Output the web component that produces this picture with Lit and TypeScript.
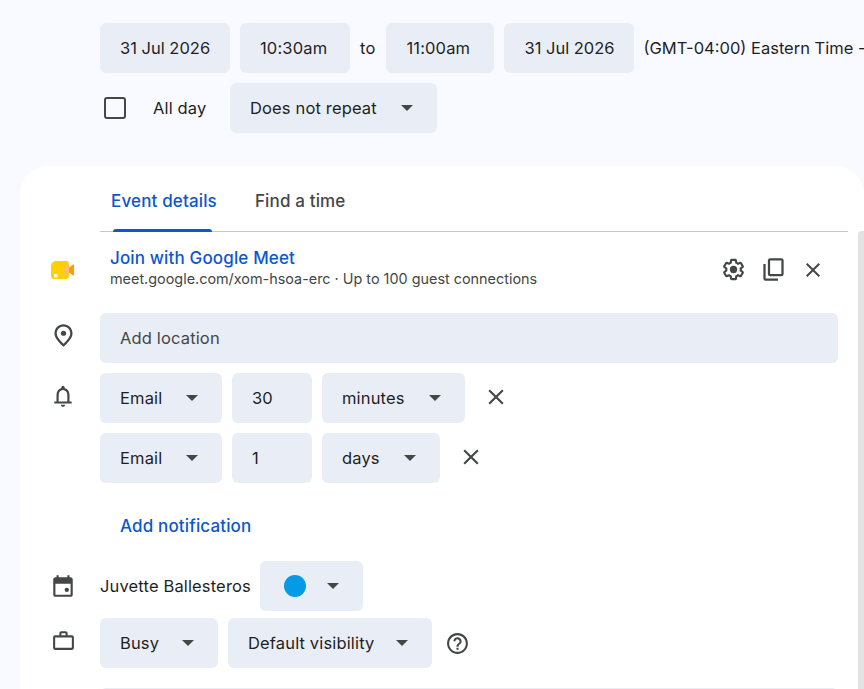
import { LitElement, html, css, svg } from 'lit'
import { customElement } from 'lit/decorators.js'

const ICONS: Record<string, unknown> = {
  close: svg`<path d="M6.4 19 5 17.6l5.6-5.6L5 6.4 6.4 5l5.6 5.6L17.6 5 19 6.4 13.4 12l5.6 5.6-1.4 1.4-5.6-5.6z"/>`,
  gear: svg`<path fill-rule="evenodd" d="M13.85 22.25h-3.7c-.74 0-1.36-.54-1.45-1.27l-.27-1.89c-.27-.14-.53-.29-.79-.46l-1.8.72c-.7.26-1.47-.03-1.81-.65L2.2 15.53c-.35-.66-.2-1.44.36-1.88l1.53-1.19c-.01-.15-.02-.3-.02-.46 0-.15.01-.31.02-.46l-1.52-1.19c-.59-.45-.74-1.26-.37-1.88l1.85-3.19c.34-.62 1.11-.9 1.79-.63l1.81.73c.26-.17.52-.32.78-.46l.27-1.91c.09-.7.71-1.25 1.44-1.25h3.7c.74 0 1.36.54 1.45 1.27l.27 1.89c.27.14.53.29.79.46l1.8-.72c.71-.26 1.48.03 1.82.65l1.84 3.18c.36.66.2 1.44-.36 1.88l-1.52 1.19c.01.15.02.3.02.46s-.01.31-.02.46l1.52 1.19c.56.45.72 1.23.37 1.86l-1.86 3.22c-.34.62-1.11.9-1.8.63l-1.8-.72c-.26.17-.52.32-.78.46l-.27 1.91c-.1.68-.72 1.22-1.46 1.22zm-3.23-2h2.76l.37-2.55.53-.22c.44-.18.88-.44 1.34-.78l.45-.34 2.38.96 1.38-2.4-2.03-1.58.07-.56c.03-.26.06-.51.06-.78s-.03-.53-.06-.78l-.07-.56 2.03-1.58-1.39-2.4-2.39.96-.45-.35c-.42-.32-.87-.58-1.33-.77l-.52-.22-.37-2.55h-2.76l-.37 2.55-.53.21c-.44.19-.88.44-1.34.79l-.45.33-2.38-.95-1.39 2.39 2.03 1.58-.07.56a7 7 0 0 0-.06.79c0 .26.02.53.06.78l.07.56-2.03 1.58 1.38 2.4 2.39-.96.45.35c.43.33.86.58 1.33.77l.53.22.38 2.55z"/><circle cx="12" cy="12" r="3.5"/>`,
  copy: svg`<path fill-rule="evenodd" d="M9 2h10a2 2 0 0 1 2 2v12a2 2 0 0 1-2 2H9a2 2 0 0 1-2-2V4a2 2 0 0 1 2-2zm0 2v12h10V4z"/><path d="M3 7h2v13h11v2H5a2 2 0 0 1-2-2z"/>`,
  pin: svg`<path fill-rule="evenodd" d="M12 2c-4.2 0-8 3.22-8 8.2 0 3.32 2.67 7.25 8 11.8 5.33-4.55 8-8.48 8-11.8C20 5.22 16.2 2 12 2zm0 17.33c-4.05-3.7-6-6.79-6-9.14C6 6.57 8.65 4 12 4s6 2.57 6 6.2c0 2.34-1.95 5.44-6 9.13z"/><circle cx="12" cy="10" r="2.3"/>`,
  bell: svg`<path fill-rule="evenodd" d="M18 17v-6c0-3.07-1.63-5.64-4.5-6.32V4c0-.83-.67-1.5-1.5-1.5s-1.5.67-1.5 1.5v.68C7.64 5.36 6 7.92 6 11v6H4v2h16v-2h-2zm-2 0H8v-6c0-2.48 1.51-4.5 4-4.5s4 2.02 4 4.5v6z"/><path d="M12 22c1.1 0 2-.9 2-2h-4c0 1.1.9 2 2 2z"/>`,
  calendar: svg`<path fill-rule="evenodd" d="M19 4h-1V2h-2v2H8V2H6v2H5c-1.1 0-2 .9-2 2v14c0 1.1.9 2 2 2h14c1.1 0 2-.9 2-2V6c0-1.1-.9-2-2-2zM5 10h14v10H5z"/><circle cx="15.5" cy="15.5" r="2"/>`,
  bag: svg`<path fill-rule="evenodd" d="M20 7h-4V5c0-1.1-.9-2-2-2h-4c-1.1 0-2 .9-2 2v2H4c-1.1 0-2 .9-2 2v10c0 1.1.9 2 2 2h16c1.1 0 2-.9 2-2V9c0-1.1-.9-2-2-2zM10 5h4v2h-4zm10 14H4V9h16z"/>`,
  help: svg`<path fill-rule="evenodd" d="M12 2C6.48 2 2 6.48 2 12s4.48 10 10 10 10-4.48 10-10S17.52 2 12 2zm0 18c-4.41 0-8-3.59-8-8s3.59-8 8-8 8 3.59 8 8-3.59 8-8 8z"/><path d="M11 16h2v2h-2zM12.6 6.05c-2.06-.3-3.88.97-4.43 2.79-.18.58.26 1.16.87 1.16h.2c.41 0 .74-.29.88-.67.32-.89 1.27-1.5 2.3-1.28.95.2 1.65 1.13 1.57 2.1-.1 1.34-1.62 1.63-2.45 2.88 0 .01-.01.01-.01.02-.01.02-.02.03-.03.05-.09.15-.18.32-.25.5-.01.03-.03.05-.04.08-.01.02-.01.04-.02.07-.12.34-.2.75-.2 1.25h2c0-.42.11-.77.28-1.07.02-.03.03-.06.05-.09.08-.14.18-.27.28-.39.01-.01.02-.03.03-.04.1-.12.21-.23.33-.34.96-.91 2.26-1.65 1.99-3.56-.24-1.74-1.61-3.21-3.35-3.46z"/>`,
}

const icon = (name: string, size = 24) =>
  html`<span class="slot"><svg class="icon" width=${size} height=${size} viewBox="0 0 24 24">${ICONS[name]}</svg></span>`

const caret = html`<span class="caret"></span>`

@customElement('field-box')
export class FieldBox extends LitElement {
  static styles = css`
    :host {
      display: inline-flex;
      align-items: center;
      justify-content: space-between;
      box-sizing: border-box;
      height: 50px;
      padding: 0 24px 0 20px;
      background: #e9eef6;
      border-radius: 6px;
      color: #1f1f1f;
      white-space: nowrap;
      flex: none;
    }
  `

  render() {
    return html`<slot></slot>`
  }
}

@customElement('app-root')
export class AppRoot extends LitElement {
  static styles = css`
    :host {
      display: block;
      position: relative;
      width: 864px;
      height: 689px;
      overflow: hidden;
      background: #f8faff;
      font-family: Inter, Roboto, 'Liberation Sans', sans-serif;
      font-size: 16.5px;
      letter-spacing: 0.15px;
      color: #1f1f1f;
    }

    .slot {
      display: flex;
      align-items: center;
      justify-content: center;
      width: 24px;
      height: 24px;
      flex: none;
    }

    .icon {
      display: block;
      fill: #444746;
      flex: none;
    }

    .caret {
      display: block;
      width: 0;
      height: 0;
      border-left: 6px solid transparent;
      border-right: 6px solid transparent;
      border-top: 6px solid #444746;
      flex: none;
    }

    .top {
      display: flex;
      flex-direction: column;
      gap: 10px;
      padding: 23px 0 0 100px;
      height: 166px;
      box-sizing: border-box;
    }

    .row {
      display: flex;
      align-items: center;
      gap: 10px;
      white-space: nowrap;
    }

    .date {
      letter-spacing: 0;
    }

    .to {
      width: 16px;
      margin-right: 1px;
      text-align: center;
    }

    .tz {
      margin-left: -1px;
      letter-spacing: 0;
    }

    .check {
      box-sizing: border-box;
      width: 22px;
      height: 22px;
      margin: 0 17px 0 4px;
      border: 2px solid #444746;
      border-radius: 3px;
    }

    .allday {
      width: 67px;
    }

    .card {
      box-sizing: border-box;
      margin-left: 20px;
      height: 523px;
      padding-left: 80px;
      background: #fff;
      border-radius: 28px 28px 0 0;
      overflow: hidden;
    }

    .tabs {
      display: flex;
      width: 748px;
      height: 66px;
      border-bottom: 1px solid #c7c7c7;
      box-sizing: border-box;
      font-size: 17px;
      font-weight: 500;
      color: #444746;
    }

    .tab {
      position: relative;
      display: flex;
      align-items: center;
      height: 66px;
      padding: 4px 13px 0 11px;
      margin-right: 14px;
      box-sizing: border-box;
    }

    .tab.active {
      color: #0b57d0;
    }

    .tab.active::after {
      content: '';
      position: absolute;
      left: 13px;
      right: 18px;
      bottom: 0;
      height: 3px;
      background: #0b57d0;
      border-radius: 3px 3px 0 0;
    }

    .line {
      display: flex;
      align-items: center;
      position: relative;
    }

    .side {
      position: absolute;
      left: -49px;
      top: 0;
      bottom: 0;
      display: flex;
      align-items: center;
    }

    .side.raised {
      bottom: 5px;
    }

    .meet {
      height: 81px;
      padding-left: 10px;
      width: 738px;
      box-sizing: border-box;
    }

    .meet-text {
      flex: 1;
      margin-top: -10px;
    }

    .meet-title {
      color: #0b57d0;
      font-size: 17px;
      font-weight: 500;
      line-height: 22px;
    }

    .meet-sub {
      color: #444746;
      font-size: 14.4px;
      letter-spacing: 0;
      line-height: 19px;
    }

    .meet-actions {
      display: flex;
      gap: 16px;
      margin-right: 13px;
      margin-top: -6px;
    }

    .location {
      width: 738px;
      color: #444746;
      justify-content: flex-start;
    }

    .stack {
      display: flex;
      flex-direction: column;
      gap: 10px;
    }

    .x {
      margin: -2px 0 0 8.5px;
    }

    .add {
      color: #0b57d0;
      font-size: 17px;
      font-weight: 500;
      padding: 8px 0 0 20px;
      height: 78px;
      box-sizing: border-box;
      display: flex;
      align-items: center;
    }

    .owner {
      width: 150px;
    }

    .color {
      width: 103px;
    }

    .dot {
      width: 22px;
      height: 22px;
      margin-left: 4px;
      border-radius: 50%;
      background: #039be5;
    }

    .help {
      margin-left: 3px;
    }

    .busy {
      margin-top: -3px;
    }

    .desc {
      width: 738px;
      height: 50px;
      margin-top: 20px;
      background: #e9eef6;
      border-radius: 6px;
    }

    .scrollbar {
      position: absolute;
      top: 231px;
      right: 0;
      width: 6px;
      height: 458px;
      background: #e3e3e3;
      border-radius: 4px 0 0 0;
    }
  `

  private select(label: string, width: number) {
    return html`<field-box style="width:${width}px">${label}${caret}</field-box>`
  }

  render() {
    return html`
      <div class="top">
        <div class="row">
          <field-box class="date" style="width:130px">31 Jul 2026</field-box>
          <field-box style="width:110px">10:30am</field-box>
          <span class="to">to</span>
          <field-box style="width:108px">11:00am</field-box>
          <field-box class="date" style="width:130px">31 Jul 2026</field-box>
          <span class="tz">(GMT-04:00) Eastern Time -</span>
        </div>
        <div class="row">
          <div class="check"></div>
          <span class="allday">All day</span>
          ${this.select('Does not repeat', 207)}
        </div>
      </div>
      <div class="card">
        <div class="tabs">
          <div class="tab active">Event details</div>
          <div class="tab">Find a time</div>
        </div>
        <div class="line meet">
          <div class="side raised">
            <svg width="23" height="18" viewBox="0 0 23 18">
              <defs>
                <radialGradient id="blush" cx="1" cy="0.5" r="0.45">
                  <stop offset="0" stop-color="#ffb3a0" />
                  <stop offset="1" stop-color="#ffd000" />
                </radialGradient>
              </defs>
              <path d="M0 5a5 5 0 0 1 5-5h10a3 3 0 0 1 3 3v12a3 3 0 0 1-3 3H3a3 3 0 0 1-3-3z" fill="url(#blush)" />
              <path d="M18 6.5 23 3v12l-5-3.5z" fill="#ff9e00" />
              <rect x="3" y="13" width="3.5" height="3.5" rx="1" fill="#fff" />
            </svg>
          </div>
          <div class="meet-text">
            <div class="meet-title">Join with Google Meet</div>
            <div class="meet-sub">meet.google.com/xom-hsoa-erc · Up to 100 guest connections</div>
          </div>
          <div class="meet-actions">${icon('gear', 25)}${icon('copy', 27)}${icon('close')}</div>
        </div>
        <div class="stack">
          <div class="line">
            <div class="side raised">${icon('pin', 27)}</div>
            <field-box class="location">Add location</field-box>
          </div>
          <div class="line row">
            <div class="side raised">${icon('bell', 26)}</div>
            ${this.select('Email', 122)}
            <field-box style="width:80px">30</field-box>
            ${this.select('minutes', 143)}
            <span class="x">${icon('close', 26)}</span>
          </div>
          <div class="line row">
            ${this.select('Email', 122)}
            <field-box style="width:80px">1</field-box>
            ${this.select('days', 118)}
            <span class="x">${icon('close', 26)}</span>
          </div>
        </div>
        <div class="add">Add notification</div>
        <div class="stack">
          <div class="line row">
            <div class="side">${icon('calendar', 26)}</div>
            <span class="owner">Juvette Ballesteros</span>
            <field-box class="color"><span class="dot"></span>${caret}</field-box>
          </div>
          <div class="line row busy">
            <div class="side raised">${icon('bag', 25)}</div>
            ${this.select('Busy', 118)}
            ${this.select('Default visibility', 204)}
            <span class="help">${icon('help', 25)}</span>
          </div>
        </div>
        <div class="desc"></div>
      </div>
      <div class="scrollbar"></div>
    `
  }
}
